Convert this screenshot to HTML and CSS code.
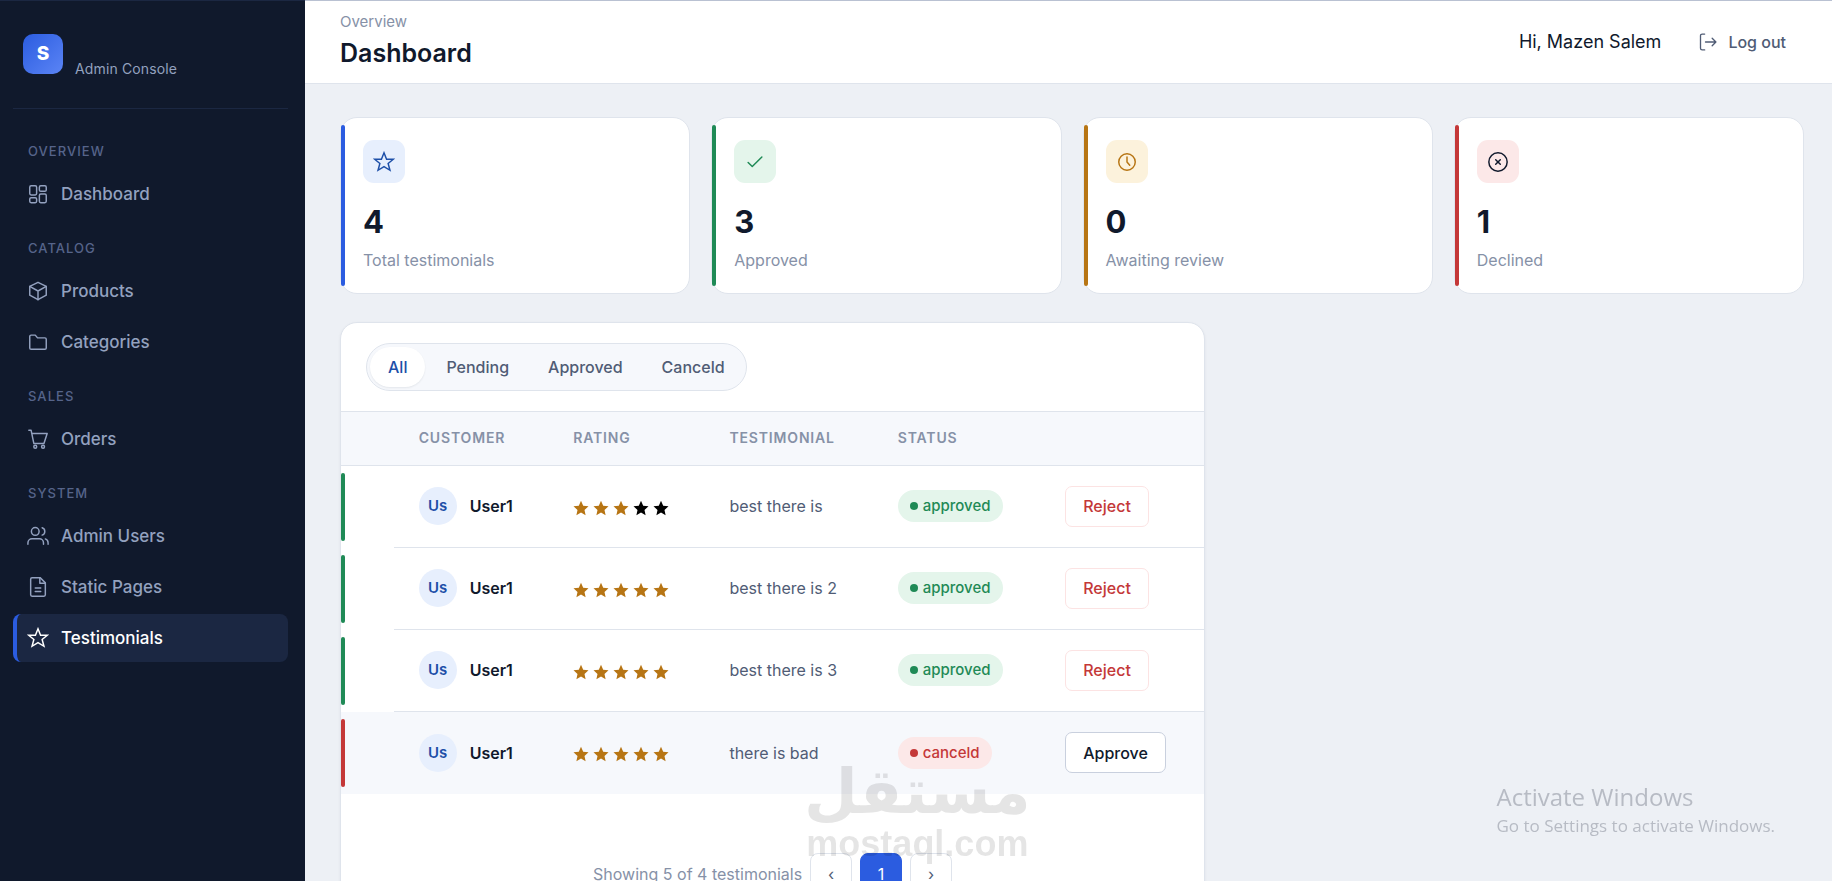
FILE: index.html
```
<!DOCTYPE html>
<html lang="en">
<head>
    <meta charset="utf-8">
    <meta name="viewport" content="width=device-width, initial-scale=1">
    <title>Dashboard - Admin Console</title>
    <link rel="stylesheet" href="styles.css">
</head>
<body>
    <!-- shared icon shapes -->
    <svg class="sprite" aria-hidden="true">
        <symbol id="i-star" viewBox="0 0 24 24"><path stroke-linejoin="miter" d="M12 2l2.800 7h7.400l-5.700 4.700 2 7.300-6.500-4-6.500 4 2-7.300L1.800 9h7.400z"/></symbol>
        <symbol id="i-star-fill" viewBox="0 0 16 16"><path d="M8 .8l2.200 4.900 5.300.6-4 3.600 1.100 5.300L8 12.500l-4.600 2.700 1.100-5.300-4-3.600 5.300-.6z"/></symbol>
    </svg>

    <div class="layout">
        <aside class="sidebar">
            <div class="brand">
                <span class="brand-mark">S</span>
                <span class="brand-sub">Admin Console</span>
            </div>

            <nav>
                <div class="nav-label">Overview</div>
                <a class="nav-item" href="#">
                    <svg class="icon" viewBox="0 0 24 24"><rect x="3" y="3" width="7.500" height="10" rx="1.500"/><rect x="13.500" y="3" width="7.500" height="6" rx="1.500"/><rect x="13.500" y="12" width="7.500" height="9.500" rx="1.500"/><rect x="3" y="16" width="7.500" height="5.500" rx="1.500"/></svg>
                    Dashboard
                </a>

                <div class="nav-label">Catalog</div>
                <a class="nav-item" href="#">
                    <svg class="icon" viewBox="0 0 24 24"><path d="M12 2.500l9 4.500v9.500l-9 5-9-5V7z"/><path d="M3 7l9 5 9-5M12 12v9.500"/></svg>
                    Products
                </a>
                <a class="nav-item" href="#">
                    <svg class="icon" viewBox="0 0 24 24"><path d="M3 6a1.500 1.500 0 0 1 1.500-1.500H9l2.500 3h8A1.500 1.500 0 0 1 21 9v9.500a1.500 1.500 0 0 1-1.500 1.500h-15A1.500 1.500 0 0 1 3 18.500z"/></svg>
                    Categories
                </a>

                <div class="nav-label">Sales</div>
                <a class="nav-item" href="#">
                    <svg class="icon" viewBox="0 0 24 24"><path d="M2 2.500h2.500L7.500 17h11L22 6H5.300"/><circle cx="9" cy="20.500" r="1.600"/><circle cx="17.500" cy="20.500" r="1.600"/></svg>
                    Orders
                </a>

                <div class="nav-label">System</div>
                <a class="nav-item" href="#">
                    <svg class="icon" viewBox="0 0 24 24"><circle cx="9" cy="7" r="4.200"/><path d="M1 21v-1.500A4.500 4.500 0 0 1 5.500 15h8a4.500 4.500 0 0 1 4.500 4.500V21M16.500 3a4.200 4.200 0 0 1 0 8M20 15.200a4.500 4.500 0 0 1 3 4.300V21"/></svg>
                    Admin Users
                </a>
                <a class="nav-item" href="#">
                    <svg class="icon" viewBox="0 0 24 24"><path d="M14.500 2H5.500A1.500 1.500 0 0 0 4 3.500v17A1.500 1.500 0 0 0 5.500 22h13a1.500 1.500 0 0 0 1.500-1.500V7.500z"/><path d="M14 2v6h6M9 13h6M9 17h6"/></svg>
                    Static Pages
                </a>
                <a class="nav-item active" href="#" aria-current="page">
                    <svg class="icon"><use href="#i-star"/></svg>
                    Testimonials
                </a>
            </nav>
        </aside>

        <div class="main">
            <header class="topbar">
                <div>
                    <div class="crumb">Overview</div>
                    <h1>Dashboard</h1>
                </div>
                <div class="topbar-right">
                    <span class="hello">Hi, Mazen Salem</span>
                    <button class="logout" type="button">
                        <svg class="icon" viewBox="0 0 24 24"><path d="M8 2.500H5A2 2 0 0 0 3 4.500v15a2 2 0 0 0 2 2h3M9 12h12.500M17 7.500l4.500 4.500-4.500 4.500"/></svg>
                        Log out
                    </button>
                </div>
            </header>

            <main class="content">
                <section class="stats">
                    <div class="card blue">
                        <div class="card-icon"><svg class="icon"><use href="#i-star"/></svg></div>
                        <div class="card-value">4</div>
                        <div class="card-label">Total testimonials</div>
                    </div>
                    <div class="card green">
                        <div class="card-icon"><svg class="icon" viewBox="0 0 24 24"><path d="M4.500 12.500l4.500 4.500L19.500 6.500"/></svg></div>
                        <div class="card-value">3</div>
                        <div class="card-label">Approved</div>
                    </div>
                    <div class="card amber">
                        <div class="card-icon"><svg class="icon" viewBox="0 0 24 24"><circle cx="12" cy="12" r="9"/><path d="M12 6.500V12l3 3.500"/></svg></div>
                        <div class="card-value">0</div>
                        <div class="card-label">Awaiting review</div>
                    </div>
                    <div class="card red">
                        <div class="card-icon"><svg class="icon" viewBox="0 0 24 24"><circle cx="12" cy="12" r="10"/><path d="M9.500 9.500l5 5M14.500 9.500l-5 5"/></svg></div>
                        <div class="card-value">1</div>
                        <div class="card-label">Declined</div>
                    </div>
                </section>

                <section class="panel">
                    <div class="panel-head">
                        <div class="tabs">
                            <button class="tab active" type="button">All</button>
                            <button class="tab" type="button">Pending</button>
                            <button class="tab" type="button">Approved</button>
                            <button class="tab" type="button">Canceld</button>
                        </div>
                    </div>

                    <table>
                        <thead>
                            <tr>
                                <th class="col-bar"></th>
                                <th class="col-customer">Customer</th>
                                <th class="col-rating">Rating</th>
                                <th class="col-text">Testimonial</th>
                                <th class="col-status">Status</th>
                                <th></th>
                            </tr>
                        </thead>
                        <tbody>
                            <tr>
                                <td class="bar ok"></td>
                                <td><div class="customer"><span class="avatar">Us</span>User1</div></td>
                                <td>
                                    <div class="stars" role="img" aria-label="3 out of 5">
                                        <svg><use href="#i-star-fill"/></svg>
                                        <svg><use href="#i-star-fill"/></svg>
                                        <svg><use href="#i-star-fill"/></svg>
                                        <svg class="off"><use href="#i-star-fill"/></svg>
                                        <svg class="off"><use href="#i-star-fill"/></svg>
                                    </div>
                                </td>
                                <td>best there is</td>
                                <td><span class="badge ok">approved</span></td>
                                <td><button class="btn reject" type="button">Reject</button></td>
                            </tr>
                            <tr>
                                <td class="bar ok"></td>
                                <td><div class="customer"><span class="avatar">Us</span>User1</div></td>
                                <td>
                                    <div class="stars" role="img" aria-label="5 out of 5">
                                        <svg><use href="#i-star-fill"/></svg>
                                        <svg><use href="#i-star-fill"/></svg>
                                        <svg><use href="#i-star-fill"/></svg>
                                        <svg><use href="#i-star-fill"/></svg>
                                        <svg><use href="#i-star-fill"/></svg>
                                    </div>
                                </td>
                                <td>best there is 2</td>
                                <td><span class="badge ok">approved</span></td>
                                <td><button class="btn reject" type="button">Reject</button></td>
                            </tr>
                            <tr>
                                <td class="bar ok"></td>
                                <td><div class="customer"><span class="avatar">Us</span>User1</div></td>
                                <td>
                                    <div class="stars" role="img" aria-label="5 out of 5">
                                        <svg><use href="#i-star-fill"/></svg>
                                        <svg><use href="#i-star-fill"/></svg>
                                        <svg><use href="#i-star-fill"/></svg>
                                        <svg><use href="#i-star-fill"/></svg>
                                        <svg><use href="#i-star-fill"/></svg>
                                    </div>
                                </td>
                                <td>best there is 3</td>
                                <td><span class="badge ok">approved</span></td>
                                <td><button class="btn reject" type="button">Reject</button></td>
                            </tr>
                            <tr class="hovered">
                                <td class="bar bad"></td>
                                <td><div class="customer"><span class="avatar">Us</span>User1</div></td>
                                <td>
                                    <div class="stars" role="img" aria-label="5 out of 5">
                                        <svg><use href="#i-star-fill"/></svg>
                                        <svg><use href="#i-star-fill"/></svg>
                                        <svg><use href="#i-star-fill"/></svg>
                                        <svg><use href="#i-star-fill"/></svg>
                                        <svg><use href="#i-star-fill"/></svg>
                                    </div>
                                </td>
                                <td>there is bad</td>
                                <td><span class="badge bad">canceld</span></td>
                                <td><button class="btn" type="button">Approve</button></td>
                            </tr>
                        </tbody>
                    </table>

                    <div class="pager">
                        <span>Showing 5 of 4 testimonials</span>
                        <button class="page" type="button" aria-label="Previous">‹</button>
                        <button class="page current" type="button">1</button>
                        <button class="page" type="button" aria-label="Next">›</button>
                    </div>
                </section>
            </main>
        </div>
    </div>

    <div class="watermark">
        <span class="watermark-ar" lang="ar" dir="rtl">مستقل</span>
        <span class="watermark-en">mostaql.com</span>
    </div>
    <div class="activate">
        <div class="activate-title">Activate Windows</div>
        <div>Go to Settings to activate Windows.</div>
    </div>
</body>
</html>
```

FILE: styles.css
```
* { box-sizing: border-box; }
body { margin: 0; font-family: Inter, "Liberation Sans", sans-serif; font-size: 16px; line-height: 24px; color: #10192c; background: #edf0f5; }
button { font: inherit; cursor: pointer; }
a { text-decoration: none; }
.sprite { position: absolute; width: 0; height: 0; }
.icon { width: 22px; height: 22px; flex: none; fill: none; stroke: currentColor; stroke-width: 1.6; stroke-linecap: round; stroke-linejoin: round; }

.layout { display: flex; height: 100vh; }

/* sidebar */
.sidebar { flex: none; width: 305px; padding: 0 17px 0 13px; background: #10192c; border-top: 1px solid #1b2742; }
.brand { display: flex; gap: 12px; padding: 33px 10px 31px; border-bottom: 1px solid #1b2742; }
.brand-mark { width: 40px; height: 40px; border-radius: 10px; background: linear-gradient(135deg, #2b5ce0, #5b84f5); color: #fff; font-size: 19px; font-weight: 800; line-height: 40px; text-align: center; }
.brand-sub { padding-top: 27px; font-size: 14px; line-height: 16px; letter-spacing: 0.01em; color: #93a1bf; }
.brand + nav { padding-top: 15px; }
.nav-label { padding: 19px 15px 11px; font-size: 13px; font-weight: 500; line-height: 16px; letter-spacing: 0.08em; text-transform: uppercase; color: #56648a; }
.nav-item { display: flex; align-items: center; gap: 12px; height: 48px; margin-bottom: 3px; padding: 0 10px; border-left: 4px solid transparent; border-radius: 8px; font-weight: 500; font-size: 17px; color: #93a1bf; }
.nav-item.active { background: #1b2742; border-left-color: #2b5ce0; color: #fff; }

/* top bar */
.main { flex: 1; min-width: 0; display: flex; flex-direction: column; }
.topbar { display: flex; justify-content: space-between; align-items: center; flex: none; height: 84px; padding: 0 29px 0 35px; background: #fff; border-top: 1px solid #b9c1d2; border-bottom: 1px solid #dfe4ec; }
.crumb { font-size: 15px; line-height: 24px; color: #8691a7; }
h1 { margin: 0 0 2px; font-size: 25px; font-weight: 600; line-height: 38px; }
.topbar-right { display: flex; align-items: center; gap: 20px; }
.hello { font-size: 18px; }
.logout { display: flex; align-items: center; gap: 10px; padding: 8px 17px; border: 0; background: none; font-weight: 500; color: #505c75; }
.logout .icon { width: 20px; height: 20px; }

/* content */
.content { flex: 1; min-height: 0; overflow-y: auto; scrollbar-width: none; padding: 33px 28px 35px 35px; }
.stats { display: grid; grid-template-columns: repeat(4, 1fr); gap: 21px; margin-bottom: 28px; }
.card { position: relative; padding: 22px 22px 21px; background: #fff; border: 1px solid #dfe4ec; border-radius: 17px; }
.card::before { content: ""; position: absolute; left: 0; top: 7px; bottom: 7px; width: 4px; border-radius: 2px; background: currentColor; }
.card-icon { display: flex; align-items: center; justify-content: center; width: 42px; height: 43px; border-radius: 11px; }
.card-value { margin-top: 20px; font-size: 31px; font-weight: 700; line-height: 38px; color: #10192c; }
.card-label { margin-top: 7px; line-height: 24px; color: #8691a7; }
.blue { color: #2b5ce0; }
.blue .card-icon { background: #e7effd; color: #1d4fa8; }
.green { color: #1f8a56; }
.green .card-icon { background: #e4f5eb; }
.amber { color: #b77514; }
.amber .card-icon { background: #fcf2dc; }
.red { color: #c43838; }
.red .card-icon { background: #fce8e8; color: #10192c; }

.panel { width: 59.1%; background: #fff; border: 1px solid #dfe4ec; border-radius: 17px; box-shadow: 0 1px 3px rgba(16, 25, 44, 0.06); overflow: hidden; }
.panel-head { padding: 20px 25px; }
.tabs { display: inline-flex; gap: 3px; vertical-align: top; padding: 3px; background: #f6f8fc; border: 1px solid #dfe4ec; border-radius: 24px; }
.tab { height: 40px; padding: 0 18px; border: 0; border-radius: 20px; background: none; font-weight: 500; color: #505c75; }
.tab.active { background: #fff; color: #1d4fa8; box-shadow: 0 1px 2px rgba(16, 25, 44, 0.08); }

table { width: 100%; border-collapse: separate; border-spacing: 0; table-layout: fixed; }
th { height: 55px; padding: 0 0 2px 25px; background: #f6f8fc; border-top: 1px solid #dfe4ec; border-bottom: 1px solid #dfe4ec; font-size: 14px; font-weight: 600; letter-spacing: 0.06em; text-align: left; text-transform: uppercase; color: #8691a7; }
td { height: 82px; padding: 0 0 1px 25px; border-bottom: 1px solid #dfe4ec; color: #505c75; }
td.bar, tr:last-child td { border-bottom: 0; }
.col-bar { width: 6.1%; padding: 0; }
.col-customer { width: 17.9%; }
.col-rating { width: 18.1%; }
.col-text { width: 19.5%; }
.col-status { width: 19.4%; }
.bar { position: relative; }
.bar::before { content: ""; position: absolute; left: 0; top: 7px; bottom: 7px; width: 4px; border-radius: 2px; background: #1f8a56; }
.bar.bad::before { background: #c43838; }
.hovered td { background: #f6f8fc; }
.customer { display: flex; align-items: center; gap: 13px; font-weight: 600; color: #10192c; }
.avatar { width: 38px; height: 38px; border-radius: 50%; background: #e7effd; color: #1d4fa8; font-size: 15px; line-height: 38px; text-align: center; }
.stars { display: flex; gap: 4px; padding-top: 3px; }
.stars svg { width: 16px; height: 16px; fill: #b77514; }
.stars .off { fill: #000; }
.badge { display: inline-flex; align-items: center; gap: 5px; height: 32px; padding: 0 12px; border-radius: 16px; font-size: 15px; font-weight: 500; vertical-align: middle; }
.badge::before { content: ""; width: 8px; height: 8px; border-radius: 50%; background: currentColor; }
.badge.ok { background: #e4f5eb; color: #1f8a56; }
.badge.bad { background: #fce8e8; color: #c43838; }
.btn { height: 41px; padding: 0 17px; border: 1px solid #c9d0de; border-radius: 7px; background: #fff; font-weight: 500; vertical-align: middle; color: #10192c; }
.btn.reject { border-color: #fce3e3; color: #c43838; }

.pager { display: flex; align-items: center; justify-content: center; gap: 8px; padding: 59px 25px 24px; color: #8691a7; }
.page { width: 42px; height: 42px; padding: 0; border: 1px solid #dfe4ec; border-radius: 8px; background: #fff; color: #505c75; }
.page.current { border-color: #2b5ce0; background: #2b5ce0; color: #fff; }

/* overlays */
.watermark { position: fixed; left: 804px; bottom: 17px; display: flex; flex-direction: column; align-items: center; color: #000; opacity: 0.1; pointer-events: none; }
.watermark-ar { font-family: "DejaVu Sans", sans-serif; font-size: 62px; font-weight: 700; line-height: 64px; }
.watermark-en { font-family: "Liberation Sans", sans-serif; font-size: 36px; font-weight: 700; line-height: 40px; }
.activate { position: fixed; right: 57px; bottom: 43px; font-family: "Open Sans", sans-serif; font-size: 17px; line-height: 24px; color: #b7bbc4; pointer-events: none; }
.activate-title { font-size: 24px; line-height: 34px; }
```
